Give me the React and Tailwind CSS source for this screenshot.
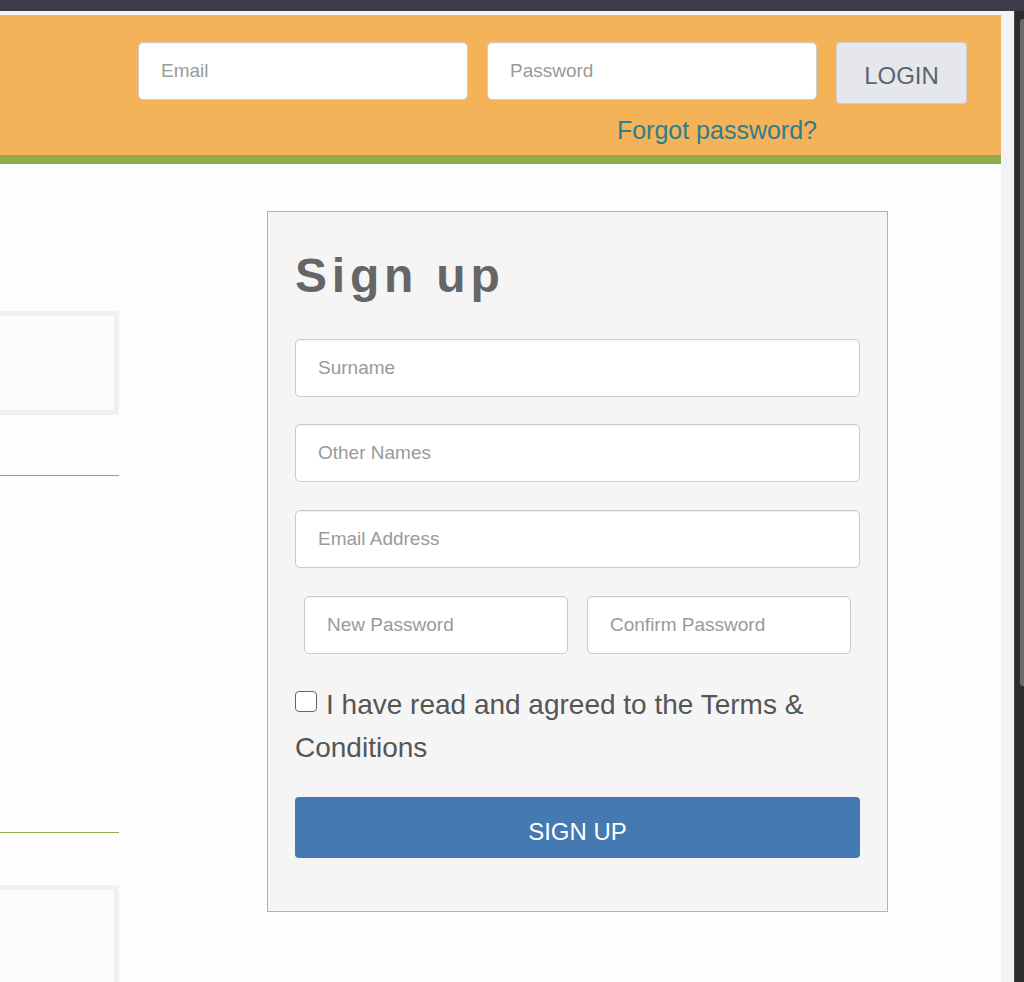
import React from "react";

const font = "font-['Liberation_Sans','Helvetica',Arial,sans-serif]";

function Field({ placeholder, className = "" }) {
  return (
    <input
      type="text"
      placeholder={placeholder}
      className={`block h-[58px] rounded-[5px] border border-[#cbcbcb] bg-white px-[22px] text-[19px] text-[#555] placeholder:text-[#9a9a9a] shadow-[inset_0_1px_1px_rgba(0,0,0,0.06)] outline-none ${className}`}
    />
  );
}

export default function App() {
  return (
    <div className={`${font} flex h-[982px] w-[1024px] flex-col overflow-hidden bg-[#2c2c2c]`}>
      <div className="h-[11px] w-full shrink-0 bg-[#3d3a4b]" />
      <div className="flex min-h-0 flex-1">
        <div className="flex min-h-0 w-[1014px] shrink-0 flex-col bg-[#f2f3f7] pt-[4px] pr-[13px]">
          <div className="flex min-h-0 flex-1 flex-col overflow-hidden bg-[#fdfdfd]">
            {/* Header */}
            <header className="flex h-[140px] shrink-0 items-start justify-end bg-[#f4b259] pt-[27px] pr-[34px]">
              <div className="flex items-start gap-[19px]">
                <div className="flex flex-col">
                  <div className="flex gap-[19px]">
                    <Field placeholder="Email" className="w-[330px]" />
                    <Field placeholder="Password" className="w-[330px]" />
                  </div>
                  <a className="mt-[15px] block text-right text-[25px] leading-[30px] text-[#2f7d8d]">
                    Forgot password?
                  </a>
                </div>
                <button className="flex h-[62px] w-[131px] items-center justify-center rounded-[4px] border border-[#cfd1d4] bg-[#e5e7ea] pt-[6px] text-[24px] text-[#5a6472]">
                  LOGIN
                </button>
              </div>
            </header>
            <div className="h-[9px] shrink-0 bg-[#8fac4a]" />

            {/* Main */}
            <div className="flex min-h-0 flex-1 items-start">
              <div className="flex w-[119px] shrink-0 flex-col">
                <div className="mt-[147px] h-[104px] border-[5px] border-l-0 border-[#f0f1f6] bg-[#fcfcfc]" />
                <div className="mt-[60px] h-[1px] bg-[#8fb04a]" />
                <div className="mt-[356px] h-[1px] bg-[#8fb04a]" />
                <div className="mt-[52px] h-[120px] border-[5px] border-l-0 border-[#f0f1f6] bg-[#fcfcfc]" />
              </div>

              <div className="ml-[148px] mt-[47px] w-[621px] shrink-0 border border-[#b3b3b3] bg-[#f5f5f5] px-[27px] pt-[36px] pb-[53px]">
                <h1 className="text-[48px] font-bold leading-[56px] tracking-[0.1em] text-[#666]">
                  Sign up
                </h1>
                <Field placeholder="Surname" className="mt-[35px] w-full" />
                <Field placeholder="Other Names" className="mt-[27px] w-full" />
                <Field placeholder="Email Address" className="mt-[28px] w-full" />
                <div className="mt-[28px] flex gap-[19px] px-[9px]">
                  <Field placeholder="New Password" className="w-[264px]" />
                  <Field placeholder="Confirm Password" className="w-[264px]" />
                </div>
                <p className="mt-[29px] text-[28px] leading-[43px] text-[#555]">
                  <span className="mr-[9px] inline-block h-[21px] w-[22px] rounded-[4px] border-[1.5px] border-[#666] bg-white align-[2px]" />
                  I have read and agreed to the Terms &amp; Conditions
                </p>
                <button className="mt-[28px] flex h-[61px] w-full items-center justify-center rounded-[4px] bg-[#4479b1] pt-[8px] text-[24px] text-white">
                  SIGN UP
                </button>
              </div>
            </div>
          </div>
        </div>
        <div className="relative flex-1 border-l border-[#4a4a4a] bg-[#2c2c2c]">
          <div className="absolute left-[5px] top-[8px] h-[667px] w-[6px] rounded-l-[3px] bg-[#6a6a6a]" />
        </div>
      </div>
    </div>
  );
}
